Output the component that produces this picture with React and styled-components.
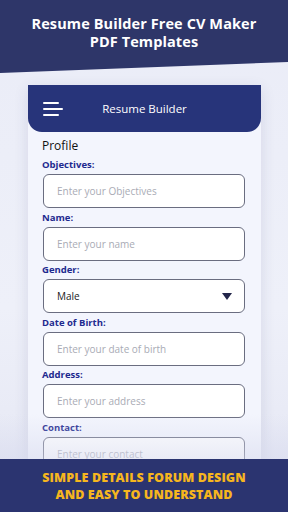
import React from "react";
import styled, { createGlobalStyle } from "styled-components";

const Global = createGlobalStyle`
  html, body { margin:0; padding:0; }
  body { font-family: "Open Sans", "Liberation Sans", sans-serif; background:#eceef8; }
`;

const Screen = styled.div`
  width:288px;
  height:512px;
  position:relative;
  overflow:hidden;
  background:linear-gradient(180deg,#eaecf7 0%,#eef0f9 60%,#e4e6f3 100%);
  display:flex;
  flex-direction:column;
`;

const TopBand = styled.div`
  height:73px;
  background:#2e3669;
  clip-path:polygon(0 0,100% 0,100% 62px,0 73px);
  display:flex;
  flex-direction:column;
  align-items:center;
  padding-top:15px;
  box-sizing:border-box;
`;

const Headline = styled.div`
  color:#fff;
  font-weight:700;
  font-size:14.5px;
  line-height:18px;
  text-align:center;
  letter-spacing:0.1px;
`;

const Phone = styled.div`
  margin:12px 0 0 28px;
  width:233px;
  flex:1;
  background:#f3f5fd;
  box-shadow:0 4px 14px rgba(40,50,110,0.12);
`;

const AppBar = styled.div`
  height:47px;
  background:#27347a;
  border-radius:0 0 14px 14px;
  display:flex;
  align-items:center;
  padding:0 15px;
  box-sizing:border-box;
`;

const Burger = styled.div`
  display:flex;
  flex-direction:column;
  gap:4px;
  width:20px;
`;

const Line = styled.span`
  display:block;
  height:2px;
  width:${p => p.w}px;
  background:#fff;
  border-radius:1px;
`;

const AppTitle = styled.div`
  flex:1;
  text-align:center;
  color:#fff;
  font-size:11.5px;
  font-weight:500;
  margin-right:20px;
`;

const Form = styled.div`
  padding:6px 16px 0 14px;
`;

const Section = styled.div`
  font-size:12px;
  color:#111;
  line-height:16px;
  margin-bottom:5px;
`;

const Label = styled.div`
  font-size:9.5px;
  font-weight:700;
  color:#1e2a8f;
  line-height:12px;
  margin-bottom:3px;
`;

const Field = styled.div`
  margin-left:1px;
  height:34px;
  border:1px solid #6a6d80;
  border-radius:6px;
  background:#fff;
  display:flex;
  align-items:center;
  justify-content:space-between;
  padding:0 12px 0 13px;
  box-sizing:border-box;
  font-size:10px;
  color:${p => (p.value ? "#222" : "#a9abb5")};
  margin-bottom:3.5px;
`;

const Caret = styled.span`
  width:0;
  height:0;
  border-left:5px solid transparent;
  border-right:5px solid transparent;
  border-top:7px solid #23264a;
`;

const Fade = styled.div`
  position:absolute;
  left:0;
  right:0;
  bottom:53px;
  height:45px;
  background:linear-gradient(180deg,rgba(230,232,245,0) 0%,rgba(215,218,238,0.55) 100%);
  pointer-events:none;
`;

const Banner = styled.div`
  position:absolute;
  left:0;
  right:0;
  bottom:0;
  height:53px;
  background:#2b3470;
  display:flex;
  align-items:center;
  justify-content:center;
  text-align:center;
  color:#f6b61e;
  font-weight:800;
  font-size:12.5px;
  line-height:17px;
  letter-spacing:0.1px;
`;

const fields = [
  { label: "Objectives:", ph: "Enter your Objectives" },
  { label: "Name:", ph: "Enter your name" },
  { label: "Gender:", value: "Male", select: true },
  { label: "Date of Birth:", ph: "Enter your date of birth" },
  { label: "Address:", ph: "Enter your address" },
  { label: "Contact:", ph: "Enter your contact" },
];

export default function App() {
  return (
    <Screen>
      <Global />
      <TopBand>
        <Headline>
          Resume Builder Free CV Maker
          <br />
          PDF Templates
        </Headline>
      </TopBand>
      <Phone>
        <AppBar>
          <Burger>
            <Line w={16} />
            <Line w={20} />
            <Line w={16} />
          </Burger>
          <AppTitle>Resume Builder</AppTitle>
        </AppBar>
        <Form>
          <Section>Profile</Section>
          {fields.map(f => (
            <div key={f.label}>
              <Label>{f.label}</Label>
              <Field value={f.value}>
                <span>{f.value || f.ph}</span>
                {f.select && <Caret />}
              </Field>
            </div>
          ))}
        </Form>
      </Phone>
      <Fade />
      <Banner>
        SIMPLE DETAILS FORUM DESIGN
        <br />
        AND EASY TO UNDERSTAND
      </Banner>
    </Screen>
  );
}
